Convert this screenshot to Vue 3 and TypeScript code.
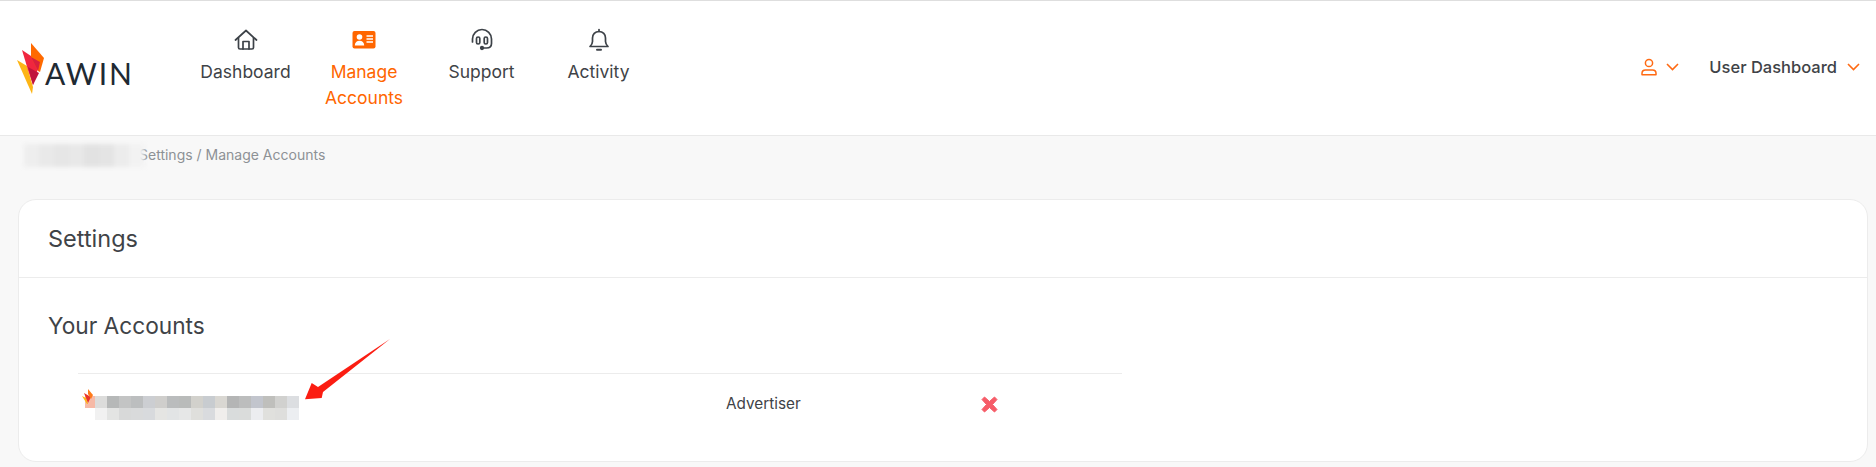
<script setup lang="ts">
const row1 = ['#f6b9a6','#dcdcdb','#b6b8b8','#c3c4c4','#bcbebf','#ccced2','#cfcecc','#babcbd','#b9bbba','#d2d1cc','#c8ccd0','#d9d7d2','#b4b5b5','#bcbdbd','#c2c5cd','#bfbfbc','#d1d1cf','#dcdee1']
const row2 = ['#ffffff','#f1f1f1','#e3e4e3','#d8d9d9','#d9dadb','#d8dadd','#e5e5e3','#e2e4e5','#e6e7e7','#dfdfdc','#d9dbde','#f0eeec','#d9dcdc','#dadcdb','#ecedf0','#e0e0dd','#dededc','#eceef1']
const crumb = ['#eeeeee','#e9e9e9','#e6e6e6','#e8e8e8','#e2e2e2','#e4e4e4','#ececec','#f2f2f2']
</script>

<template>
  <div class="page">
    <header class="topbar">
      <div class="brand">
        <svg class="flame" width="30" height="52" viewBox="0 0 30 52">
          <polygon points="1,18 11,24 17,45 16,52" fill="#fdb515"/>
          <polygon points="6,8 24,20 17,43 12,28" fill="#f0263f"/>
          <polygon points="15,1 28,16 24,30 22,29 15,15" fill="#ff6a00"/>
          <polygon points="15,15 24,20 22,29" fill="#d81f3f"/>
          <polygon points="12,25 23,31 17,43" fill="#c0143c"/>
        </svg>
        <span class="wordmark">AWIN</span>
      </div>
      <nav class="nav">
        <div class="nav-item">
          <svg class="nav-icon" width="24" height="24" viewBox="0 0 24 24" fill="none" stroke="#3d4248" stroke-width="1.7" stroke-linejoin="round" stroke-linecap="round">
            <path d="M1.500 12 12 2.500 22.500 12"/><path d="M4.500 10v9.500a1.500 1.500 0 0 0 1.500 1.500h12a1.500 1.500 0 0 0 1.500-1.500V10"/><path d="M9 21v-7.500h6V21"/>
          </svg>
          <span class="nav-label">Dashboard</span>
        </div>
        <div class="nav-item active">
          <svg class="nav-icon" width="24" height="24" viewBox="0 0 24 24">
            <rect x="0.500" y="3" width="23" height="17.500" rx="2" fill="#ff6600"/>
            <circle cx="7.500" cy="9" r="2.800" fill="#fff"/>
            <path d="M2.800 17.500c0-3 2-4.700 4.700-4.700s4.700 1.700 4.700 4.700z" fill="#fff"/>
            <path d="M14.500 8h6.500M14.500 11h6.500M14.500 14h6.500" stroke="#fff" stroke-width="1.300"/>
          </svg>
          <span class="nav-label">Manage Accounts</span>
        </div>
        <div class="nav-item">
          <svg class="nav-icon" width="24" height="24" viewBox="0 0 24 24" fill="none" stroke="#3d4248" stroke-width="1.700" stroke-linecap="round">
            <path d="M2.500 14V11a9.500 9.500 0 0 1 19 0v4.500c0 3-2 4.500-5 4.500h-3"/>
            <rect x="6.500" y="9" width="3.300" height="7" rx="1.600"/>
            <rect x="14.200" y="9" width="3.300" height="7" rx="1.600"/>
            <circle cx="12" cy="20" r="1.300" fill="#3d4248"/>
          </svg>
          <span class="nav-label">Support</span>
        </div>
        <div class="nav-item">
          <svg class="nav-icon" width="24" height="24" viewBox="0 0 24 24" fill="none" stroke="#3d4248" stroke-width="1.700" stroke-linecap="round" stroke-linejoin="round">
            <path d="M12 3.500c-4 0-6.500 3-6.500 6.500v3.500c0 2-1 3.500-2.500 5h18c-1.500-1.500-2.500-3-2.500-5V10c0-3.500-2.500-6.500-6.500-6.500z"/>
            <path d="M12 1.500v2"/><path d="M10 21.800h4" stroke-width="2"/>
          </svg>
          <span class="nav-label">Activity</span>
        </div>
      </nav>
      <div class="account">
        <svg width="16" height="18" viewBox="0 0 16 18" fill="none" stroke="#ff6a13" stroke-width="1.500">
          <circle cx="8" cy="5" r="3.600"/>
          <path d="M1 16.700v-1.500c0-2 1.500-3.300 3.500-3.300h7c2 0 3.500 1.300 3.500 3.300v1.500z" stroke-linejoin="round"/>
        </svg>
        <svg class="chev first" width="13" height="8" viewBox="0 0 13 8" fill="none" stroke="#ff6a13" stroke-width="1.600"><path d="M1 1l5.500 5.500L12 1"/></svg>
        <span class="user-label">User Dashboard</span>
        <svg class="chev" width="13" height="8" viewBox="0 0 13 8" fill="none" stroke="#ff6a13" stroke-width="1.600"><path d="M1 1l5.500 5.500L12 1"/></svg>
      </div>
    </header>

    <div class="crumbs">
      <div class="crumb-blur">
        <i v-for="(c, i) in crumb" :key="i" :style="{ background: c }"></i>
      </div>
      <span>Settings / Manage Accounts</span>
    </div>

    <section class="card">
      <div class="card-head">Settings</div>
      <div class="card-body">
        <h2>Your Accounts</h2>
        <div class="acct-row">
          <div class="acct-name">
            <svg class="mini-flame" width="12" height="15" viewBox="0 0 12 15">
              <polygon points="0,7 4,9 6,15 5,15" fill="#fdb515"/>
              <polygon points="2,4 9,8 6,14" fill="#e8342a"/>
              <polygon points="6,0 11,6 9,10 6,5" fill="#ff7a1a"/>
            </svg>
            <div class="mosaic">
              <i v-for="(c, i) in row1" :key="'a' + i" :style="{ background: c }"></i>
              <i v-for="(c, i) in row2" :key="'b' + i" :style="{ background: c }"></i>
            </div>
          </div>
          <div class="acct-type">Advertiser</div>
          <svg class="remove" width="17" height="17" viewBox="0 0 17 17">
            <path d="M3.500 1 8.500 5.500 13.500 1 16 3.500 11.500 8.500 16 13.500 13.500 16 8.500 11.500 3.500 16 1 13.500 5.500 8.500 1 3.500z" fill="#f65c68" stroke="#f65c68" stroke-width="1" stroke-linejoin="round"/>
          </svg>
        </div>
      </div>
    </section>

    <svg class="arrow" width="100" height="80" viewBox="0 0 100 80">
      <polygon points="90,0 18,48 11.700,44 5,60.300 21.700,59 23,53" fill="#fb1d12"/>
    </svg>
  </div>
</template>

<style>
html, body { margin: 0; background: #f8f8f8; }
</style>

<style scoped>
.page {
  position: relative;
  height: 467px;
  overflow: hidden;
  background: #f8f8f8;
  font-family: Inter, "Liberation Sans", sans-serif;
  color: #3f4347;
}
.topbar {
  height: 134px;
  display: flex;
  align-items: flex-start;
  background: #fff;
  border-top: 1px solid #dedede;
  border-bottom: 1px solid #e9e9e9;
}
.brand {
  display: flex;
  align-items: flex-start;
  width: 183px;
  flex: none;
  padding: 41px 0 0 16px;
  box-sizing: border-box;
}
.flame { flex: none; }
.wordmark {
  font-family: Lato, sans-serif;
  font-size: 30px;
  line-height: 31px;
  margin: 16px 0 0 -1px;
  letter-spacing: 1.800px;
  color: #1f2a33;
}
.nav {
  display: grid;
  grid-template-columns: 125px 112px 123px 111px;
  padding-top: 27px;
}
.nav-item {
  display: flex;
  flex-direction: column;
  align-items: center;
  text-align: center;
}
.nav-icon { flex: none; }
.nav-label {
  margin-top: 7px;
  font-size: 17.500px;
  line-height: 26px;
  width: 100px;
}
.active { color: #ff6600; }
.account {
  margin-left: auto;
  display: flex;
  align-items: center;
  height: 133px;
  padding-right: 16px;
  margin-top: -1px;
  box-sizing: border-box;
}
.chev { margin-left: 10px; }
.first { margin-left: 9px; margin-right: 30px; }
.user-label {
  font-size: 16.500px;
  font-weight: 500;
}
.crumbs {
  position: relative;
  height: 63px;
  box-sizing: border-box;
  padding: 9px 0 0 139px;
  font-size: 14px;
  line-height: 20px;
  color: #8d9195;
}
.crumb-blur {
  position: absolute;
  left: 24px;
  top: 8px;
  width: 120px;
  height: 23px;
  display: flex;
  filter: blur(2px);
}
.crumb-blur i { flex: 1; }
.card {
  margin: 0 8px 0 18px;
  height: 263px;
  box-sizing: border-box;
  background: #fff;
  border: 1px solid #ececec;
  border-radius: 18px;
}
.card-head {
  height: 78px;
  box-sizing: border-box;
  padding: 0 29px;
  display: flex;
  align-items: center;
  font-size: 23.500px;
  border-bottom: 1px solid #ececec;
}
.card-body { padding: 33px 29px 0; }
h2 {
  margin: 0;
  font-size: 22.700px;
  line-height: 30px;
  font-weight: 400;
}
.acct-row {
  position: relative;
  width: 1044px;
  height: 60px;
  margin: 32px 0 0 30px;
  border-top: 1px solid #ececec;
  display: flex;
  align-items: flex-start;
}
.acct-name {
  width: 648px;
  flex: none;
  padding: 16px 0 0 7px;
  box-sizing: border-box;
  display: flex;
  position: relative;
}
.mini-flame {
  position: absolute;
  left: 4px;
  top: 15px;
  z-index: 1;
}
.mosaic {
  display: grid;
  grid-template-columns: 10px repeat(17, 12px);
  grid-auto-rows: 12px;
  margin-top: 6px;
}
.mosaic i { display: block; }
.acct-type {
  width: 255px;
  flex: none;
  font-size: 15.300px;
  line-height: 20px;
  padding-top: 20px;
}
.remove { margin-top: 22px; }
.arrow {
  position: absolute;
  left: 300px;
  top: 339px;
}
</style>
